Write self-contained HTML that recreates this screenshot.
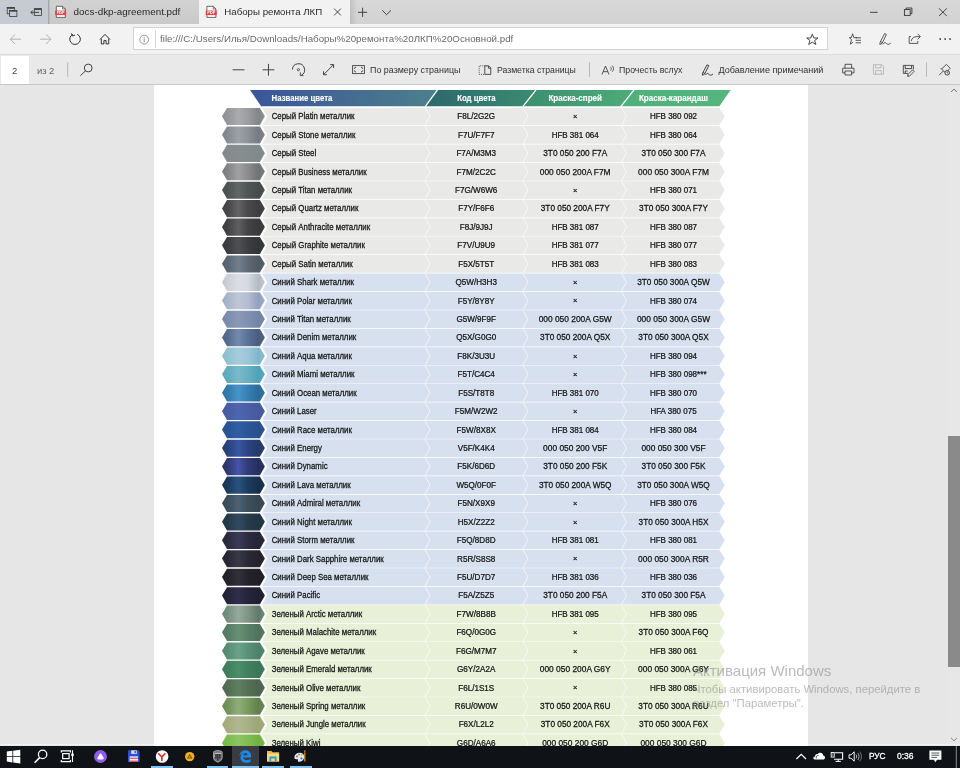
<!DOCTYPE html>
<html lang="ru">
<head>
<meta charset="utf-8">
<title>Наборы ремонта ЛКП</title>
<style>
html,body{margin:0;padding:0}
body{width:960px;height:768px;overflow:hidden;position:relative;background:#e6e6e6;font-family:"Liberation Sans",sans-serif;color:#222}
#root{position:absolute;left:0;top:0;width:960px;height:768px;overflow:hidden;filter:blur(.35px)}
.abs{position:absolute}
.t{position:absolute;white-space:nowrap;line-height:1;transform-origin:0 50%}
#tabbar{left:0;top:0;width:960px;height:24px;background:linear-gradient(#d8d8d8,#d2d2d2)}
#tabbar .left{left:0;top:0;width:48.5px;height:24px;background:#c6cbd3}
#tabbar .tab1{left:49px;top:0;width:150px;height:24px;background:linear-gradient(#d2d2d2,#c9c9c9);border-left:1px solid #b9bcc2;box-sizing:border-box}
#tabbar .tab2{left:199px;top:0;width:151px;height:24px;background:#f2f2f2}
#addr{left:0;top:24px;width:960px;height:30px;background:#f2f2f2;border-bottom:1px solid #dcdcdc}
#url{left:132.5px;top:3.2px;width:695px;height:23.3px;background:#fff;border:1px solid #d4d4d4;box-sizing:border-box}
#pdfbar{left:0;top:55px;width:960px;height:29px;background:#e9e9e9;border-bottom:1px solid #c6c6c6}
#pageno{left:1px;top:1px;width:28px;height:27.5px;background:#fff}
#viewer{left:0;top:85px;width:960px;height:660.5px;background:#e6e6e6;overflow:hidden}
#page{left:153.5px;top:0;width:654px;height:660.5px;background:#fff}
.tbl{position:absolute;left:0;top:85px}
.tbl text{font-family:"Liberation Sans",sans-serif;font-size:8.4px;fill:#151515;stroke:#151515;stroke-width:.25px}
.tbl .h text{font-weight:bold;fill:#fff;font-size:8.3px;stroke:#fff;stroke-width:.12px}
.tbl text.x{font-size:7.5px}
#sb{left:946px;top:85.5px;width:14px;height:660px;background:#e7e7e7}
.vline{top:744.4px;height:1.1px;background:#f2f2f2}
#thumb{left:948px;top:436px;width:12px;height:231px;background:#8a8a8a}
#wm{color:rgba(146,146,146,.62)}
#taskbar{left:0;top:745.5px;width:960px;height:22.5px;background:#0f1216}
#taskbar .act{left:231.5px;top:0;width:27.5px;height:22.5px;background:#393c41}
#taskbar .ul{position:absolute;top:20.5px;height:2px;background:#84c4f4}
#ico{position:absolute;left:0;top:0;pointer-events:none}
</style>
</head>
<body>
<div id="root">
<div id="tabbar" class="abs">
  <div class="left abs"></div>
  <div class="tab1 abs"></div>
  <div class="tab2 abs"></div>
  <div class="abs" style="left:350px;top:0;width:7px;height:24px;background:linear-gradient(90deg,rgba(0,0,0,.1),rgba(0,0,0,0))"></div>
  <span class="t" style="left:73.6px;top:7px;font-size:9.85px;color:#2a2a2a">docs-dkp-agreement.pdf</span>
  <span class="t" style="left:224.3px;top:7px;font-size:9.7px;color:#2a2a2a">Наборы ремонта ЛКП</span>
</div>
<div id="addr" class="abs">
  <div id="url" class="abs"></div>
  <span class="t" style="left:160px;top:10.3px;font-size:9.76px;color:#6b6b6b">file:///C:/Users/Илья/Downloads/Наборы%20ремонта%20ЛКП%20Основной.pdf</span>
</div>
<div id="pdfbar" class="abs">
  <div id="pageno" class="abs"></div>
  <span class="t" style="left:11.9px;top:11px;font-size:9.5px;color:#444">2</span>
  <span class="t" style="left:36.9px;top:11px;font-size:9.45px;color:#666">из 2</span>
  <span class="t" style="left:370px;top:11.4px;font-size:8.92px;color:#333">По размеру страницы</span>
  <span class="t" style="left:496.9px;top:11.4px;font-size:8.71px;color:#333">Разметка страницы</span>
  <span class="t" style="left:619px;top:11.4px;font-size:8.76px;color:#333">Прочесть вслух</span>
  <span class="t" style="left:718.5px;top:11.4px;font-size:9.08px;color:#333">Добавление примечаний</span>
</div>
<div id="viewer" class="abs">
  <div id="page" class="abs"></div>
</div>
<svg class="tbl" width="960" height="661" viewBox="0 85 960 661">
<defs><linearGradient id="h1" gradientUnits="userSpaceOnUse" x1="255" x2="432" y1="0" y2="0"><stop offset="0" stop-color="#3a569a"/><stop offset="0.5" stop-color="#446a92"/><stop offset="1" stop-color="#4a7f8c"/></linearGradient>
<linearGradient id="h2" gradientUnits="userSpaceOnUse" x1="430" x2="530" y1="0" y2="0"><stop offset="0" stop-color="#2c696c"/><stop offset="1" stop-color="#3a8a70"/></linearGradient>
<linearGradient id="h3" gradientUnits="userSpaceOnUse" x1="528" x2="628" y1="0" y2="0"><stop offset="0" stop-color="#3c9070"/><stop offset="1" stop-color="#4caa78"/></linearGradient>
<linearGradient id="h4" gradientUnits="userSpaceOnUse" x1="626" x2="726" y1="0" y2="0"><stop offset="0" stop-color="#50b07a"/><stop offset="1" stop-color="#55b57d"/></linearGradient><linearGradient id="g0" x1="0" x2="1" y1="0" y2="0"><stop offset="0" stop-color="#8d8e92"/><stop offset="0.12" stop-color="#949598"/><stop offset="0.38" stop-color="#aaabae"/><stop offset="0.6" stop-color="#9c9da0"/><stop offset="0.85" stop-color="#838588"/><stop offset="1" stop-color="#8e8f93"/></linearGradient><linearGradient id="g1" x1="0" x2="1" y1="0" y2="0"><stop offset="0" stop-color="#7f838b"/><stop offset="0.12" stop-color="#858991"/><stop offset="0.38" stop-color="#9da1a7"/><stop offset="0.6" stop-color="#8d9198"/><stop offset="0.85" stop-color="#767a82"/><stop offset="1" stop-color="#80848c"/></linearGradient><linearGradient id="g2" x1="0" x2="1" y1="0" y2="0"><stop offset="0" stop-color="#838a8c"/><stop offset="0.12" stop-color="#848b8d"/><stop offset="0.38" stop-color="#888e90"/><stop offset="0.6" stop-color="#858c8e"/><stop offset="0.85" stop-color="#82898b"/><stop offset="1" stop-color="#838a8c"/></linearGradient><linearGradient id="g3" x1="0" x2="1" y1="0" y2="0"><stop offset="0" stop-color="#7b7c7e"/><stop offset="0.12" stop-color="#828386"/><stop offset="0.38" stop-color="#9fa0a2"/><stop offset="0.6" stop-color="#8b8c8e"/><stop offset="0.85" stop-color="#717274"/><stop offset="1" stop-color="#7d7e80"/></linearGradient><linearGradient id="g4" x1="0" x2="1" y1="0" y2="0"><stop offset="0" stop-color="#4a4f4f"/><stop offset="0.12" stop-color="#4c5251"/><stop offset="0.38" stop-color="#606766"/><stop offset="0.6" stop-color="#4f5554"/><stop offset="0.85" stop-color="#474c4b"/><stop offset="1" stop-color="#4a504f"/></linearGradient><linearGradient id="g5" x1="0" x2="1" y1="0" y2="0"><stop offset="0" stop-color="#424244"/><stop offset="0.12" stop-color="#454547"/><stop offset="0.38" stop-color="#636366"/><stop offset="0.6" stop-color="#49494b"/><stop offset="0.85" stop-color="#3e3e40"/><stop offset="1" stop-color="#434345"/></linearGradient><linearGradient id="g6" x1="0" x2="1" y1="0" y2="0"><stop offset="0" stop-color="#3e3d3f"/><stop offset="0.12" stop-color="#414041"/><stop offset="0.38" stop-color="#5f5e60"/><stop offset="0.6" stop-color="#444345"/><stop offset="0.85" stop-color="#3a393a"/><stop offset="1" stop-color="#3e3d3f"/></linearGradient><linearGradient id="g7" x1="0" x2="1" y1="0" y2="0"><stop offset="0" stop-color="#37383b"/><stop offset="0.12" stop-color="#3a3b3e"/><stop offset="0.38" stop-color="#4f5054"/><stop offset="0.6" stop-color="#3d3e41"/><stop offset="0.85" stop-color="#343537"/><stop offset="1" stop-color="#38393b"/></linearGradient><linearGradient id="g8" x1="0" x2="1" y1="0" y2="0"><stop offset="0" stop-color="#55606a"/><stop offset="0.12" stop-color="#59656f"/><stop offset="0.38" stop-color="#71808d"/><stop offset="0.6" stop-color="#5e6a75"/><stop offset="0.85" stop-color="#505a63"/><stop offset="1" stop-color="#56616b"/></linearGradient><linearGradient id="g9" x1="0" x2="1" y1="0" y2="0"><stop offset="0" stop-color="#c1c6cf"/><stop offset="0.12" stop-color="#cbcfd6"/><stop offset="0.38" stop-color="#dbdee3"/><stop offset="0.6" stop-color="#d6d9df"/><stop offset="0.85" stop-color="#b4bac5"/><stop offset="1" stop-color="#c3c8d0"/></linearGradient><linearGradient id="g10" x1="0" x2="1" y1="0" y2="0"><stop offset="0" stop-color="#a0abc5"/><stop offset="0.12" stop-color="#a9b3ca"/><stop offset="0.38" stop-color="#bec6d7"/><stop offset="0.6" stop-color="#b4bdd1"/><stop offset="0.85" stop-color="#93a0bd"/><stop offset="1" stop-color="#a2adc6"/></linearGradient><linearGradient id="g11" x1="0" x2="1" y1="0" y2="0"><stop offset="0" stop-color="#7789ab"/><stop offset="0.12" stop-color="#7b8dad"/><stop offset="0.38" stop-color="#8999b6"/><stop offset="0.6" stop-color="#8091b0"/><stop offset="0.85" stop-color="#7285a7"/><stop offset="1" stop-color="#788aab"/></linearGradient><linearGradient id="g12" x1="0" x2="1" y1="0" y2="0"><stop offset="0" stop-color="#4f6586"/><stop offset="0.12" stop-color="#546b8e"/><stop offset="0.38" stop-color="#738aac"/><stop offset="0.6" stop-color="#597297"/><stop offset="0.85" stop-color="#495d7b"/><stop offset="1" stop-color="#506688"/></linearGradient><linearGradient id="g13" x1="0" x2="1" y1="0" y2="0"><stop offset="0" stop-color="#8bbcd1"/><stop offset="0.12" stop-color="#92c1d4"/><stop offset="0.38" stop-color="#a6ccdc"/><stop offset="0.6" stop-color="#9cc6d8"/><stop offset="0.85" stop-color="#7fb6cd"/><stop offset="1" stop-color="#8cbdd2"/></linearGradient><linearGradient id="g14" x1="0" x2="1" y1="0" y2="0"><stop offset="0" stop-color="#58a8bc"/><stop offset="0.12" stop-color="#5fabbf"/><stop offset="0.38" stop-color="#79b9c9"/><stop offset="0.6" stop-color="#68b0c2"/><stop offset="0.85" stop-color="#4ea2b8"/><stop offset="1" stop-color="#5aa8bc"/></linearGradient><linearGradient id="g15" x1="0" x2="1" y1="0" y2="0"><stop offset="0" stop-color="#3074a3"/><stop offset="0.12" stop-color="#3279ab"/><stop offset="0.38" stop-color="#4894c9"/><stop offset="0.6" stop-color="#3580b4"/><stop offset="0.85" stop-color="#2d6c98"/><stop offset="1" stop-color="#3075a5"/></linearGradient><linearGradient id="g16" x1="0" x2="1" y1="0" y2="0"><stop offset="0" stop-color="#475ba0"/><stop offset="0.12" stop-color="#485da3"/><stop offset="0.38" stop-color="#4f65b1"/><stop offset="0.6" stop-color="#4a5fa6"/><stop offset="0.85" stop-color="#45599c"/><stop offset="1" stop-color="#475ca0"/></linearGradient><linearGradient id="g17" x1="0" x2="1" y1="0" y2="0"><stop offset="0" stop-color="#2a5291"/><stop offset="0.12" stop-color="#2b5394"/><stop offset="0.38" stop-color="#305da5"/><stop offset="0.6" stop-color="#2c5597"/><stop offset="0.85" stop-color="#29508e"/><stop offset="1" stop-color="#2b5292"/></linearGradient><linearGradient id="g18" x1="0" x2="1" y1="0" y2="0"><stop offset="0" stop-color="#273e74"/><stop offset="0.12" stop-color="#294179"/><stop offset="0.38" stop-color="#3757a5"/><stop offset="0.6" stop-color="#2b4480"/><stop offset="0.85" stop-color="#243a6c"/><stop offset="1" stop-color="#273e75"/></linearGradient><linearGradient id="g19" x1="0" x2="1" y1="0" y2="0"><stop offset="0" stop-color="#2b3368"/><stop offset="0.12" stop-color="#2e376f"/><stop offset="0.38" stop-color="#4653a9"/><stop offset="0.6" stop-color="#323b78"/><stop offset="0.85" stop-color="#272e5e"/><stop offset="1" stop-color="#2c346a"/></linearGradient><linearGradient id="g20" x1="0" x2="1" y1="0" y2="0"><stop offset="0" stop-color="#193553"/><stop offset="0.12" stop-color="#1a3858"/><stop offset="0.38" stop-color="#275382"/><stop offset="0.6" stop-color="#1c3c5e"/><stop offset="0.85" stop-color="#16304b"/><stop offset="1" stop-color="#193554"/></linearGradient><linearGradient id="g21" x1="0" x2="1" y1="0" y2="0"><stop offset="0" stop-color="#394b56"/><stop offset="0.12" stop-color="#3b4d59"/><stop offset="0.38" stop-color="#4b6372"/><stop offset="0.6" stop-color="#3d505c"/><stop offset="0.85" stop-color="#364752"/><stop offset="1" stop-color="#394b57"/></linearGradient><linearGradient id="g22" x1="0" x2="1" y1="0" y2="0"><stop offset="0" stop-color="#233846"/><stop offset="0.12" stop-color="#243a49"/><stop offset="0.38" stop-color="#304b5f"/><stop offset="0.6" stop-color="#263c4c"/><stop offset="0.85" stop-color="#213543"/><stop offset="1" stop-color="#233847"/></linearGradient><linearGradient id="g23" x1="0" x2="1" y1="0" y2="0"><stop offset="0" stop-color="#28283c"/><stop offset="0.12" stop-color="#2a2a3f"/><stop offset="0.38" stop-color="#3b3b58"/><stop offset="0.6" stop-color="#2c2c42"/><stop offset="0.85" stop-color="#252538"/><stop offset="1" stop-color="#28283c"/></linearGradient><linearGradient id="g24" x1="0" x2="1" y1="0" y2="0"><stop offset="0" stop-color="#26252f"/><stop offset="0.12" stop-color="#282731"/><stop offset="0.38" stop-color="#3a3948"/><stop offset="0.6" stop-color="#2a2934"/><stop offset="0.85" stop-color="#24232c"/><stop offset="1" stop-color="#262630"/></linearGradient><linearGradient id="g25" x1="0" x2="1" y1="0" y2="0"><stop offset="0" stop-color="#212027"/><stop offset="0.12" stop-color="#232228"/><stop offset="0.38" stop-color="#32303a"/><stop offset="0.6" stop-color="#24232a"/><stop offset="0.85" stop-color="#201f25"/><stop offset="1" stop-color="#222127"/></linearGradient><linearGradient id="g26" x1="0" x2="1" y1="0" y2="0"><stop offset="0" stop-color="#222136"/><stop offset="0.12" stop-color="#232338"/><stop offset="0.38" stop-color="#302f4c"/><stop offset="0.6" stop-color="#25243a"/><stop offset="0.85" stop-color="#202033"/><stop offset="1" stop-color="#222236"/></linearGradient><linearGradient id="g27" x1="0" x2="1" y1="0" y2="0"><stop offset="0" stop-color="#6d8675"/><stop offset="0.12" stop-color="#748e7d"/><stop offset="0.38" stop-color="#96aa9d"/><stop offset="0.6" stop-color="#7e9686"/><stop offset="0.85" stop-color="#637a6b"/><stop offset="1" stop-color="#6e8777"/></linearGradient><linearGradient id="g28" x1="0" x2="1" y1="0" y2="0"><stop offset="0" stop-color="#547861"/><stop offset="0.12" stop-color="#577b64"/><stop offset="0.38" stop-color="#669176"/><stop offset="0.6" stop-color="#5a8068"/><stop offset="0.85" stop-color="#50725d"/><stop offset="1" stop-color="#557862"/></linearGradient><linearGradient id="g29" x1="0" x2="1" y1="0" y2="0"><stop offset="0" stop-color="#53876f"/><stop offset="0.12" stop-color="#568c73"/><stop offset="0.38" stop-color="#69a388"/><stop offset="0.6" stop-color="#5a9278"/><stop offset="0.85" stop-color="#4f8069"/><stop offset="1" stop-color="#548870"/></linearGradient><linearGradient id="g30" x1="0" x2="1" y1="0" y2="0"><stop offset="0" stop-color="#3f7a5b"/><stop offset="0.12" stop-color="#407d5d"/><stop offset="0.38" stop-color="#4a8f6a"/><stop offset="0.6" stop-color="#42805f"/><stop offset="0.85" stop-color="#3d7658"/><stop offset="1" stop-color="#3f7b5b"/></linearGradient><linearGradient id="g31" x1="0" x2="1" y1="0" y2="0"><stop offset="0" stop-color="#4f6950"/><stop offset="0.12" stop-color="#516c52"/><stop offset="0.38" stop-color="#607f61"/><stop offset="0.6" stop-color="#546f55"/><stop offset="0.85" stop-color="#4c654d"/><stop offset="1" stop-color="#506951"/></linearGradient><linearGradient id="g32" x1="0" x2="1" y1="0" y2="0"><stop offset="0" stop-color="#6b8953"/><stop offset="0.12" stop-color="#719158"/><stop offset="0.38" stop-color="#8fad79"/><stop offset="0.6" stop-color="#789a5e"/><stop offset="0.85" stop-color="#627e4d"/><stop offset="1" stop-color="#6c8a54"/></linearGradient><linearGradient id="g33" x1="0" x2="1" y1="0" y2="0"><stop offset="0" stop-color="#a0a97a"/><stop offset="0.12" stop-color="#a4ac7f"/><stop offset="0.38" stop-color="#b0b790"/><stop offset="0.6" stop-color="#a8b085"/><stop offset="0.85" stop-color="#9ca574"/><stop offset="1" stop-color="#a1aa7b"/></linearGradient><linearGradient id="g34" x1="0" x2="1" y1="0" y2="0"><stop offset="0" stop-color="#77b945"/><stop offset="0.12" stop-color="#7bbb4b"/><stop offset="0.38" stop-color="#8dc563"/><stop offset="0.6" stop-color="#80be52"/><stop offset="0.85" stop-color="#71b142"/><stop offset="1" stop-color="#77ba46"/></linearGradient></defs>
<polygon fill="url(#h1)" points="250,90 437.5,90 425.4,106.2 261.2,106.2"/>
<polygon fill="url(#h2)" points="437.5,90 536,90 523,106.2 425.4,106.2"/>
<polygon fill="url(#h3)" points="536,90 634,90 621,106.2 523,106.2"/>
<polygon fill="url(#h4)" points="634,90 730.6,90 719.4,106.2 621,106.2"/>
<g stroke="#fff" stroke-width="1.3"><line x1="437.5" y1="89.8" x2="425.4" y2="106.4"/><line x1="536" y1="89.8" x2="523" y2="106.4"/><line x1="634" y1="89.8" x2="621" y2="106.4"/></g>
<g class="h"><text transform="translate(271.6,100.9) scale(.94,1)">Название цвета</text>
<text text-anchor="middle" transform="translate(476.4,100.9) scale(.94,1)">Код цвета</text>
<text text-anchor="middle" transform="translate(575.2,100.9) scale(.97,1)">Краска-спрей</text>
<text text-anchor="middle" transform="translate(673.4,100.9) scale(.97,1)">Краска-карандаш</text></g>
<g>
<polygon fill="#e9e9e8" points="262.2,108.10 719.4,108.10 724.8,116.30 719.4,125.36 262.2,125.36 267.3,116.30"/>
<polyline fill="none" stroke="#fff" stroke-opacity=".75" stroke-width="0.9" points="425,108.10 430,116.30 425,125.36"/>
<polyline fill="none" stroke="#fff" stroke-opacity=".75" stroke-width="0.9" points="523,108.10 528,116.30 523,125.36"/>
<polyline fill="none" stroke="#fff" stroke-opacity=".75" stroke-width="0.9" points="621.5,108.10 626.5,116.30 621.5,125.36"/>
<polygon fill="url(#g0)" points="222,116.30 227,107.95 259.9,107.95 264.9,116.30 259.9,125.05 227,125.05"/>
<text transform="translate(271.7,119.30) scale(0.935,1)">Серый Platin металлик</text>
<text text-anchor="middle" transform="translate(476.2,119.30) scale(0.965,1)">F8L/2G2G</text>
<text class="x" text-anchor="middle" x="575.2" y="119.10">×</text>
<text text-anchor="middle" transform="translate(673.5,119.30) scale(0.953,1)">HFB 380 092</text>
</g>
<g>
<polygon fill="#e9e9e8" points="262.2,126.03 719.4,126.03 724.8,134.73 719.4,143.79 262.2,143.79 267.3,134.73"/>
<polyline fill="none" stroke="#fff" stroke-opacity=".75" stroke-width="0.9" points="425,126.03 430,134.73 425,143.79"/>
<polyline fill="none" stroke="#fff" stroke-opacity=".75" stroke-width="0.9" points="523,126.03 528,134.73 523,143.79"/>
<polyline fill="none" stroke="#fff" stroke-opacity=".75" stroke-width="0.9" points="621.5,126.03 626.5,134.73 621.5,143.79"/>
<polygon fill="url(#g1)" points="222,134.73 227,126.38 259.9,126.38 264.9,134.73 259.9,143.48 227,143.48"/>
<text transform="translate(271.7,137.73) scale(0.935,1)">Серый Stone металлик</text>
<text text-anchor="middle" transform="translate(476.2,137.73) scale(0.965,1)">F7U/F7F7</text>
<text text-anchor="middle" transform="translate(575.2,137.73) scale(0.953,1)">HFB 381 064</text>
<text text-anchor="middle" transform="translate(673.5,137.73) scale(0.953,1)">HFB 380 064</text>
</g>
<g>
<polygon fill="#e9e9e8" points="262.2,144.46 719.4,144.46 724.8,153.16 719.4,162.22 262.2,162.22 267.3,153.16"/>
<polyline fill="none" stroke="#fff" stroke-opacity=".75" stroke-width="0.9" points="425,144.46 430,153.16 425,162.22"/>
<polyline fill="none" stroke="#fff" stroke-opacity=".75" stroke-width="0.9" points="523,144.46 528,153.16 523,162.22"/>
<polyline fill="none" stroke="#fff" stroke-opacity=".75" stroke-width="0.9" points="621.5,144.46 626.5,153.16 621.5,162.22"/>
<polygon fill="url(#g2)" points="222,153.16 227,144.81 259.9,144.81 264.9,153.16 259.9,161.91 227,161.91"/>
<text transform="translate(271.7,156.16) scale(0.935,1)">Серый Steel</text>
<text text-anchor="middle" transform="translate(476.2,156.16) scale(0.965,1)">F7A/M3M3</text>
<text text-anchor="middle" transform="translate(575.2,156.16) scale(0.985,1)">3T0 050 200 F7A</text>
<text text-anchor="middle" transform="translate(673.5,156.16) scale(0.985,1)">3T0 050 300 F7A</text>
</g>
<g>
<polygon fill="#e9e9e8" points="262.2,162.89 719.4,162.89 724.8,171.59 719.4,180.65 262.2,180.65 267.3,171.59"/>
<polyline fill="none" stroke="#fff" stroke-opacity=".75" stroke-width="0.9" points="425,162.89 430,171.59 425,180.65"/>
<polyline fill="none" stroke="#fff" stroke-opacity=".75" stroke-width="0.9" points="523,162.89 528,171.59 523,180.65"/>
<polyline fill="none" stroke="#fff" stroke-opacity=".75" stroke-width="0.9" points="621.5,162.89 626.5,171.59 621.5,180.65"/>
<polygon fill="url(#g3)" points="222,171.59 227,163.24 259.9,163.24 264.9,171.59 259.9,180.34 227,180.34"/>
<text transform="translate(271.7,174.59) scale(0.935,1)">Серый Business металлик</text>
<text text-anchor="middle" transform="translate(476.2,174.59) scale(0.965,1)">F7M/2C2C</text>
<text text-anchor="middle" transform="translate(575.2,174.59) scale(1.0,1)">000 050 200A F7M</text>
<text text-anchor="middle" transform="translate(673.5,174.59) scale(1.0,1)">000 050 300A F7M</text>
</g>
<g>
<polygon fill="#e9e9e8" points="262.2,181.32 719.4,181.32 724.8,190.02 719.4,199.08 262.2,199.08 267.3,190.02"/>
<polyline fill="none" stroke="#fff" stroke-opacity=".75" stroke-width="0.9" points="425,181.32 430,190.02 425,199.08"/>
<polyline fill="none" stroke="#fff" stroke-opacity=".75" stroke-width="0.9" points="523,181.32 528,190.02 523,199.08"/>
<polyline fill="none" stroke="#fff" stroke-opacity=".75" stroke-width="0.9" points="621.5,181.32 626.5,190.02 621.5,199.08"/>
<polygon fill="url(#g4)" points="222,190.02 227,181.67 259.9,181.67 264.9,190.02 259.9,198.77 227,198.77"/>
<text transform="translate(271.7,193.02) scale(0.935,1)">Серый Titan металлик</text>
<text text-anchor="middle" transform="translate(476.2,193.02) scale(0.965,1)">F7G/W6W6</text>
<text class="x" text-anchor="middle" x="575.2" y="192.82">×</text>
<text text-anchor="middle" transform="translate(673.5,193.02) scale(0.953,1)">HFB 380 071</text>
</g>
<g>
<polygon fill="#e9e9e8" points="262.2,199.75 719.4,199.75 724.8,208.45 719.4,217.51 262.2,217.51 267.3,208.45"/>
<polyline fill="none" stroke="#fff" stroke-opacity=".75" stroke-width="0.9" points="425,199.75 430,208.45 425,217.51"/>
<polyline fill="none" stroke="#fff" stroke-opacity=".75" stroke-width="0.9" points="523,199.75 528,208.45 523,217.51"/>
<polyline fill="none" stroke="#fff" stroke-opacity=".75" stroke-width="0.9" points="621.5,199.75 626.5,208.45 621.5,217.51"/>
<polygon fill="url(#g5)" points="222,208.45 227,200.10 259.9,200.10 264.9,208.45 259.9,217.20 227,217.20"/>
<text transform="translate(271.7,211.45) scale(0.935,1)">Серый Quartz металлик</text>
<text text-anchor="middle" transform="translate(476.2,211.45) scale(0.965,1)">F7Y/F6F6</text>
<text text-anchor="middle" transform="translate(575.2,211.45) scale(0.985,1)">3T0 050 200A F7Y</text>
<text text-anchor="middle" transform="translate(673.5,211.45) scale(0.985,1)">3T0 050 300A F7Y</text>
</g>
<g>
<polygon fill="#e9e9e8" points="262.2,218.18 719.4,218.18 724.8,226.88 719.4,235.94 262.2,235.94 267.3,226.88"/>
<polyline fill="none" stroke="#fff" stroke-opacity=".75" stroke-width="0.9" points="425,218.18 430,226.88 425,235.94"/>
<polyline fill="none" stroke="#fff" stroke-opacity=".75" stroke-width="0.9" points="523,218.18 528,226.88 523,235.94"/>
<polyline fill="none" stroke="#fff" stroke-opacity=".75" stroke-width="0.9" points="621.5,218.18 626.5,226.88 621.5,235.94"/>
<polygon fill="url(#g6)" points="222,226.88 227,218.53 259.9,218.53 264.9,226.88 259.9,235.63 227,235.63"/>
<text transform="translate(271.7,229.88) scale(0.935,1)">Серый Anthracite металлик</text>
<text text-anchor="middle" transform="translate(476.2,229.88) scale(0.965,1)">F8J/9J9J</text>
<text text-anchor="middle" transform="translate(575.2,229.88) scale(0.953,1)">HFB 381 087</text>
<text text-anchor="middle" transform="translate(673.5,229.88) scale(0.953,1)">HFB 380 087</text>
</g>
<g>
<polygon fill="#e9e9e8" points="262.2,236.61 719.4,236.61 724.8,245.31 719.4,254.37 262.2,254.37 267.3,245.31"/>
<polyline fill="none" stroke="#fff" stroke-opacity=".75" stroke-width="0.9" points="425,236.61 430,245.31 425,254.37"/>
<polyline fill="none" stroke="#fff" stroke-opacity=".75" stroke-width="0.9" points="523,236.61 528,245.31 523,254.37"/>
<polyline fill="none" stroke="#fff" stroke-opacity=".75" stroke-width="0.9" points="621.5,236.61 626.5,245.31 621.5,254.37"/>
<polygon fill="url(#g7)" points="222,245.31 227,236.96 259.9,236.96 264.9,245.31 259.9,254.06 227,254.06"/>
<text transform="translate(271.7,248.31) scale(0.935,1)">Серый Graphite металлик</text>
<text text-anchor="middle" transform="translate(476.2,248.31) scale(0.965,1)">F7V/U9U9</text>
<text text-anchor="middle" transform="translate(575.2,248.31) scale(0.953,1)">HFB 381 077</text>
<text text-anchor="middle" transform="translate(673.5,248.31) scale(0.953,1)">HFB 380 077</text>
</g>
<g>
<polygon fill="#e9e9e8" points="262.2,255.04 719.4,255.04 724.8,263.74 719.4,272.80 262.2,272.80 267.3,263.74"/>
<polyline fill="none" stroke="#fff" stroke-opacity=".75" stroke-width="0.9" points="425,255.04 430,263.74 425,272.80"/>
<polyline fill="none" stroke="#fff" stroke-opacity=".75" stroke-width="0.9" points="523,255.04 528,263.74 523,272.80"/>
<polyline fill="none" stroke="#fff" stroke-opacity=".75" stroke-width="0.9" points="621.5,255.04 626.5,263.74 621.5,272.80"/>
<polygon fill="url(#g8)" points="222,263.74 227,255.39 259.9,255.39 264.9,263.74 259.9,272.49 227,272.49"/>
<text transform="translate(271.7,266.74) scale(0.935,1)">Серый Satin металлик</text>
<text text-anchor="middle" transform="translate(476.2,266.74) scale(0.965,1)">F5X/5T5T</text>
<text text-anchor="middle" transform="translate(575.2,266.74) scale(0.953,1)">HFB 381 083</text>
<text text-anchor="middle" transform="translate(673.5,266.74) scale(0.953,1)">HFB 380 083</text>
</g>
<g>
<polygon fill="#d6e0ee" points="262.2,273.47 719.4,273.47 724.8,282.17 719.4,291.23 262.2,291.23 267.3,282.17"/>
<polyline fill="none" stroke="#fff" stroke-opacity=".75" stroke-width="0.9" points="425,273.47 430,282.17 425,291.23"/>
<polyline fill="none" stroke="#fff" stroke-opacity=".75" stroke-width="0.9" points="523,273.47 528,282.17 523,291.23"/>
<polyline fill="none" stroke="#fff" stroke-opacity=".75" stroke-width="0.9" points="621.5,273.47 626.5,282.17 621.5,291.23"/>
<polygon fill="url(#g9)" points="222,282.17 227,273.82 259.9,273.82 264.9,282.17 259.9,290.92 227,290.92"/>
<text transform="translate(271.7,285.17) scale(0.935,1)">Синий Shark металлик</text>
<text text-anchor="middle" transform="translate(476.2,285.17) scale(0.965,1)">Q5W/H3H3</text>
<text class="x" text-anchor="middle" x="575.2" y="284.97">×</text>
<text text-anchor="middle" transform="translate(673.5,285.17) scale(0.985,1)">3T0 050 300A Q5W</text>
</g>
<g>
<polygon fill="#d6e0ee" points="262.2,291.90 719.4,291.90 724.8,300.60 719.4,309.66 262.2,309.66 267.3,300.60"/>
<polyline fill="none" stroke="#fff" stroke-opacity=".75" stroke-width="0.9" points="425,291.90 430,300.60 425,309.66"/>
<polyline fill="none" stroke="#fff" stroke-opacity=".75" stroke-width="0.9" points="523,291.90 528,300.60 523,309.66"/>
<polyline fill="none" stroke="#fff" stroke-opacity=".75" stroke-width="0.9" points="621.5,291.90 626.5,300.60 621.5,309.66"/>
<polygon fill="url(#g10)" points="222,300.60 227,292.25 259.9,292.25 264.9,300.60 259.9,309.35 227,309.35"/>
<text transform="translate(271.7,303.60) scale(0.935,1)">Синий Polar металлик</text>
<text text-anchor="middle" transform="translate(476.2,303.60) scale(0.965,1)">F5Y/8Y8Y</text>
<text class="x" text-anchor="middle" x="575.2" y="303.40">×</text>
<text text-anchor="middle" transform="translate(673.5,303.60) scale(0.953,1)">HFB 380 074</text>
</g>
<g>
<polygon fill="#d6e0ee" points="262.2,310.33 719.4,310.33 724.8,319.03 719.4,328.09 262.2,328.09 267.3,319.03"/>
<polyline fill="none" stroke="#fff" stroke-opacity=".75" stroke-width="0.9" points="425,310.33 430,319.03 425,328.09"/>
<polyline fill="none" stroke="#fff" stroke-opacity=".75" stroke-width="0.9" points="523,310.33 528,319.03 523,328.09"/>
<polyline fill="none" stroke="#fff" stroke-opacity=".75" stroke-width="0.9" points="621.5,310.33 626.5,319.03 621.5,328.09"/>
<polygon fill="url(#g11)" points="222,319.03 227,310.68 259.9,310.68 264.9,319.03 259.9,327.78 227,327.78"/>
<text transform="translate(271.7,322.03) scale(0.935,1)">Синий Titan металлик</text>
<text text-anchor="middle" transform="translate(476.2,322.03) scale(0.965,1)">G5W/9F9F</text>
<text text-anchor="middle" transform="translate(575.2,322.03) scale(1.0,1)">000 050 200A G5W</text>
<text text-anchor="middle" transform="translate(673.5,322.03) scale(1.0,1)">000 050 300A G5W</text>
</g>
<g>
<polygon fill="#d6e0ee" points="262.2,328.76 719.4,328.76 724.8,337.46 719.4,346.52 262.2,346.52 267.3,337.46"/>
<polyline fill="none" stroke="#fff" stroke-opacity=".75" stroke-width="0.9" points="425,328.76 430,337.46 425,346.52"/>
<polyline fill="none" stroke="#fff" stroke-opacity=".75" stroke-width="0.9" points="523,328.76 528,337.46 523,346.52"/>
<polyline fill="none" stroke="#fff" stroke-opacity=".75" stroke-width="0.9" points="621.5,328.76 626.5,337.46 621.5,346.52"/>
<polygon fill="url(#g12)" points="222,337.46 227,329.11 259.9,329.11 264.9,337.46 259.9,346.21 227,346.21"/>
<text transform="translate(271.7,340.46) scale(0.935,1)">Синий Denim металлик</text>
<text text-anchor="middle" transform="translate(476.2,340.46) scale(0.965,1)">Q5X/G0G0</text>
<text text-anchor="middle" transform="translate(575.2,340.46) scale(0.985,1)">3T0 050 200A Q5X</text>
<text text-anchor="middle" transform="translate(673.5,340.46) scale(0.985,1)">3T0 050 300A Q5X</text>
</g>
<g>
<polygon fill="#d6e0ee" points="262.2,347.19 719.4,347.19 724.8,355.89 719.4,364.95 262.2,364.95 267.3,355.89"/>
<polyline fill="none" stroke="#fff" stroke-opacity=".75" stroke-width="0.9" points="425,347.19 430,355.89 425,364.95"/>
<polyline fill="none" stroke="#fff" stroke-opacity=".75" stroke-width="0.9" points="523,347.19 528,355.89 523,364.95"/>
<polyline fill="none" stroke="#fff" stroke-opacity=".75" stroke-width="0.9" points="621.5,347.19 626.5,355.89 621.5,364.95"/>
<polygon fill="url(#g13)" points="222,355.89 227,347.54 259.9,347.54 264.9,355.89 259.9,364.64 227,364.64"/>
<text transform="translate(271.7,358.89) scale(0.935,1)">Синий Aqua металлик</text>
<text text-anchor="middle" transform="translate(476.2,358.89) scale(0.965,1)">F8K/3U3U</text>
<text class="x" text-anchor="middle" x="575.2" y="358.69">×</text>
<text text-anchor="middle" transform="translate(673.5,358.89) scale(0.953,1)">HFB 380 094</text>
</g>
<g>
<polygon fill="#d6e0ee" points="262.2,365.62 719.4,365.62 724.8,374.32 719.4,383.38 262.2,383.38 267.3,374.32"/>
<polyline fill="none" stroke="#fff" stroke-opacity=".75" stroke-width="0.9" points="425,365.62 430,374.32 425,383.38"/>
<polyline fill="none" stroke="#fff" stroke-opacity=".75" stroke-width="0.9" points="523,365.62 528,374.32 523,383.38"/>
<polyline fill="none" stroke="#fff" stroke-opacity=".75" stroke-width="0.9" points="621.5,365.62 626.5,374.32 621.5,383.38"/>
<polygon fill="url(#g14)" points="222,374.32 227,365.97 259.9,365.97 264.9,374.32 259.9,383.07 227,383.07"/>
<text transform="translate(271.7,377.32) scale(0.935,1)">Синий Miami металлик</text>
<text text-anchor="middle" transform="translate(476.2,377.32) scale(0.965,1)">F5T/C4C4</text>
<text class="x" text-anchor="middle" x="575.2" y="377.12">×</text>
<text text-anchor="middle" transform="translate(673.5,377.32) scale(0.953,1)">HFB 380 098</text>
<text transform="translate(697.1,377.32) scale(0.965,1)">***</text>
</g>
<g>
<polygon fill="#d6e0ee" points="262.2,384.05 719.4,384.05 724.8,392.75 719.4,401.81 262.2,401.81 267.3,392.75"/>
<polyline fill="none" stroke="#fff" stroke-opacity=".75" stroke-width="0.9" points="425,384.05 430,392.75 425,401.81"/>
<polyline fill="none" stroke="#fff" stroke-opacity=".75" stroke-width="0.9" points="523,384.05 528,392.75 523,401.81"/>
<polyline fill="none" stroke="#fff" stroke-opacity=".75" stroke-width="0.9" points="621.5,384.05 626.5,392.75 621.5,401.81"/>
<polygon fill="url(#g15)" points="222,392.75 227,384.40 259.9,384.40 264.9,392.75 259.9,401.50 227,401.50"/>
<text transform="translate(271.7,395.75) scale(0.935,1)">Синий Ocean металлик</text>
<text text-anchor="middle" transform="translate(476.2,395.75) scale(0.965,1)">F5S/T8T8</text>
<text text-anchor="middle" transform="translate(575.2,395.75) scale(0.953,1)">HFB 381 070</text>
<text text-anchor="middle" transform="translate(673.5,395.75) scale(0.953,1)">HFB 380 070</text>
</g>
<g>
<polygon fill="#d6e0ee" points="262.2,402.48 719.4,402.48 724.8,411.18 719.4,420.24 262.2,420.24 267.3,411.18"/>
<polyline fill="none" stroke="#fff" stroke-opacity=".75" stroke-width="0.9" points="425,402.48 430,411.18 425,420.24"/>
<polyline fill="none" stroke="#fff" stroke-opacity=".75" stroke-width="0.9" points="523,402.48 528,411.18 523,420.24"/>
<polyline fill="none" stroke="#fff" stroke-opacity=".75" stroke-width="0.9" points="621.5,402.48 626.5,411.18 621.5,420.24"/>
<polygon fill="url(#g16)" points="222,411.18 227,402.83 259.9,402.83 264.9,411.18 259.9,419.93 227,419.93"/>
<text transform="translate(271.7,414.18) scale(0.935,1)">Синий Laser</text>
<text text-anchor="middle" transform="translate(476.2,414.18) scale(0.965,1)">F5M/W2W2</text>
<text class="x" text-anchor="middle" x="575.2" y="413.98">×</text>
<text text-anchor="middle" transform="translate(673.5,414.18) scale(0.953,1)">HFA 380 075</text>
</g>
<g>
<polygon fill="#d6e0ee" points="262.2,420.91 719.4,420.91 724.8,429.61 719.4,438.67 262.2,438.67 267.3,429.61"/>
<polyline fill="none" stroke="#fff" stroke-opacity=".75" stroke-width="0.9" points="425,420.91 430,429.61 425,438.67"/>
<polyline fill="none" stroke="#fff" stroke-opacity=".75" stroke-width="0.9" points="523,420.91 528,429.61 523,438.67"/>
<polyline fill="none" stroke="#fff" stroke-opacity=".75" stroke-width="0.9" points="621.5,420.91 626.5,429.61 621.5,438.67"/>
<polygon fill="url(#g17)" points="222,429.61 227,421.26 259.9,421.26 264.9,429.61 259.9,438.36 227,438.36"/>
<text transform="translate(271.7,432.61) scale(0.935,1)">Синий Race металлик</text>
<text text-anchor="middle" transform="translate(476.2,432.61) scale(0.965,1)">F5W/8X8X</text>
<text text-anchor="middle" transform="translate(575.2,432.61) scale(0.953,1)">HFB 381 084</text>
<text text-anchor="middle" transform="translate(673.5,432.61) scale(0.953,1)">HFB 380 084</text>
</g>
<g>
<polygon fill="#d6e0ee" points="262.2,439.34 719.4,439.34 724.8,448.04 719.4,457.10 262.2,457.10 267.3,448.04"/>
<polyline fill="none" stroke="#fff" stroke-opacity=".75" stroke-width="0.9" points="425,439.34 430,448.04 425,457.10"/>
<polyline fill="none" stroke="#fff" stroke-opacity=".75" stroke-width="0.9" points="523,439.34 528,448.04 523,457.10"/>
<polyline fill="none" stroke="#fff" stroke-opacity=".75" stroke-width="0.9" points="621.5,439.34 626.5,448.04 621.5,457.10"/>
<polygon fill="url(#g18)" points="222,448.04 227,439.69 259.9,439.69 264.9,448.04 259.9,456.79 227,456.79"/>
<text transform="translate(271.7,451.04) scale(0.935,1)">Синий Energy</text>
<text text-anchor="middle" transform="translate(476.2,451.04) scale(0.965,1)">V5F/K4K4</text>
<text text-anchor="middle" transform="translate(575.2,451.04) scale(1.0,1)">000 050 200 V5F</text>
<text text-anchor="middle" transform="translate(673.5,451.04) scale(1.0,1)">000 050 300 V5F</text>
</g>
<g>
<polygon fill="#d6e0ee" points="262.2,457.77 719.4,457.77 724.8,466.47 719.4,475.53 262.2,475.53 267.3,466.47"/>
<polyline fill="none" stroke="#fff" stroke-opacity=".75" stroke-width="0.9" points="425,457.77 430,466.47 425,475.53"/>
<polyline fill="none" stroke="#fff" stroke-opacity=".75" stroke-width="0.9" points="523,457.77 528,466.47 523,475.53"/>
<polyline fill="none" stroke="#fff" stroke-opacity=".75" stroke-width="0.9" points="621.5,457.77 626.5,466.47 621.5,475.53"/>
<polygon fill="url(#g19)" points="222,466.47 227,458.12 259.9,458.12 264.9,466.47 259.9,475.22 227,475.22"/>
<text transform="translate(271.7,469.47) scale(0.935,1)">Синий Dynamic</text>
<text text-anchor="middle" transform="translate(476.2,469.47) scale(0.965,1)">F5K/6D6D</text>
<text text-anchor="middle" transform="translate(575.2,469.47) scale(0.985,1)">3T0 050 200 F5K</text>
<text text-anchor="middle" transform="translate(673.5,469.47) scale(0.985,1)">3T0 050 300 F5K</text>
</g>
<g>
<polygon fill="#d6e0ee" points="262.2,476.20 719.4,476.20 724.8,484.90 719.4,493.96 262.2,493.96 267.3,484.90"/>
<polyline fill="none" stroke="#fff" stroke-opacity=".75" stroke-width="0.9" points="425,476.20 430,484.90 425,493.96"/>
<polyline fill="none" stroke="#fff" stroke-opacity=".75" stroke-width="0.9" points="523,476.20 528,484.90 523,493.96"/>
<polyline fill="none" stroke="#fff" stroke-opacity=".75" stroke-width="0.9" points="621.5,476.20 626.5,484.90 621.5,493.96"/>
<polygon fill="url(#g20)" points="222,484.90 227,476.55 259.9,476.55 264.9,484.90 259.9,493.65 227,493.65"/>
<text transform="translate(271.7,487.90) scale(0.935,1)">Синий Lava металлик</text>
<text text-anchor="middle" transform="translate(476.2,487.90) scale(0.965,1)">W5Q/0F0F</text>
<text text-anchor="middle" transform="translate(575.2,487.90) scale(0.985,1)">3T0 050 200A W5Q</text>
<text text-anchor="middle" transform="translate(673.5,487.90) scale(0.985,1)">3T0 050 300A W5Q</text>
</g>
<g>
<polygon fill="#d6e0ee" points="262.2,494.63 719.4,494.63 724.8,503.33 719.4,512.39 262.2,512.39 267.3,503.33"/>
<polyline fill="none" stroke="#fff" stroke-opacity=".75" stroke-width="0.9" points="425,494.63 430,503.33 425,512.39"/>
<polyline fill="none" stroke="#fff" stroke-opacity=".75" stroke-width="0.9" points="523,494.63 528,503.33 523,512.39"/>
<polyline fill="none" stroke="#fff" stroke-opacity=".75" stroke-width="0.9" points="621.5,494.63 626.5,503.33 621.5,512.39"/>
<polygon fill="url(#g21)" points="222,503.33 227,494.98 259.9,494.98 264.9,503.33 259.9,512.08 227,512.08"/>
<text transform="translate(271.7,506.33) scale(0.935,1)">Синий Admiral металлик</text>
<text text-anchor="middle" transform="translate(476.2,506.33) scale(0.965,1)">F5N/X9X9</text>
<text class="x" text-anchor="middle" x="575.2" y="506.13">×</text>
<text text-anchor="middle" transform="translate(673.5,506.33) scale(0.953,1)">HFB 380 076</text>
</g>
<g>
<polygon fill="#d6e0ee" points="262.2,513.06 719.4,513.06 724.8,521.76 719.4,530.82 262.2,530.82 267.3,521.76"/>
<polyline fill="none" stroke="#fff" stroke-opacity=".75" stroke-width="0.9" points="425,513.06 430,521.76 425,530.82"/>
<polyline fill="none" stroke="#fff" stroke-opacity=".75" stroke-width="0.9" points="523,513.06 528,521.76 523,530.82"/>
<polyline fill="none" stroke="#fff" stroke-opacity=".75" stroke-width="0.9" points="621.5,513.06 626.5,521.76 621.5,530.82"/>
<polygon fill="url(#g22)" points="222,521.76 227,513.41 259.9,513.41 264.9,521.76 259.9,530.51 227,530.51"/>
<text transform="translate(271.7,524.76) scale(0.935,1)">Синий Night металлик</text>
<text text-anchor="middle" transform="translate(476.2,524.76) scale(0.965,1)">H5X/Z2Z2</text>
<text class="x" text-anchor="middle" x="575.2" y="524.56">×</text>
<text text-anchor="middle" transform="translate(673.5,524.76) scale(0.985,1)">3T0 050 300A H5X</text>
</g>
<g>
<polygon fill="#d6e0ee" points="262.2,531.49 719.4,531.49 724.8,540.19 719.4,549.25 262.2,549.25 267.3,540.19"/>
<polyline fill="none" stroke="#fff" stroke-opacity=".75" stroke-width="0.9" points="425,531.49 430,540.19 425,549.25"/>
<polyline fill="none" stroke="#fff" stroke-opacity=".75" stroke-width="0.9" points="523,531.49 528,540.19 523,549.25"/>
<polyline fill="none" stroke="#fff" stroke-opacity=".75" stroke-width="0.9" points="621.5,531.49 626.5,540.19 621.5,549.25"/>
<polygon fill="url(#g23)" points="222,540.19 227,531.84 259.9,531.84 264.9,540.19 259.9,548.94 227,548.94"/>
<text transform="translate(271.7,543.19) scale(0.935,1)">Синий Storm металлик</text>
<text text-anchor="middle" transform="translate(476.2,543.19) scale(0.965,1)">F5Q/8D8D</text>
<text text-anchor="middle" transform="translate(575.2,543.19) scale(0.953,1)">HFB 381 081</text>
<text text-anchor="middle" transform="translate(673.5,543.19) scale(0.953,1)">HFB 380 081</text>
</g>
<g>
<polygon fill="#d6e0ee" points="262.2,549.92 719.4,549.92 724.8,558.62 719.4,567.68 262.2,567.68 267.3,558.62"/>
<polyline fill="none" stroke="#fff" stroke-opacity=".75" stroke-width="0.9" points="425,549.92 430,558.62 425,567.68"/>
<polyline fill="none" stroke="#fff" stroke-opacity=".75" stroke-width="0.9" points="523,549.92 528,558.62 523,567.68"/>
<polyline fill="none" stroke="#fff" stroke-opacity=".75" stroke-width="0.9" points="621.5,549.92 626.5,558.62 621.5,567.68"/>
<polygon fill="url(#g24)" points="222,558.62 227,550.27 259.9,550.27 264.9,558.62 259.9,567.37 227,567.37"/>
<text transform="translate(271.7,561.62) scale(0.935,1)">Синий Dark Sapphire металлик</text>
<text text-anchor="middle" transform="translate(476.2,561.62) scale(0.965,1)">R5R/S8S8</text>
<text class="x" text-anchor="middle" x="575.2" y="561.42">×</text>
<text text-anchor="middle" transform="translate(673.5,561.62) scale(1.0,1)">000 050 300A R5R</text>
</g>
<g>
<polygon fill="#d6e0ee" points="262.2,568.35 719.4,568.35 724.8,577.05 719.4,586.11 262.2,586.11 267.3,577.05"/>
<polyline fill="none" stroke="#fff" stroke-opacity=".75" stroke-width="0.9" points="425,568.35 430,577.05 425,586.11"/>
<polyline fill="none" stroke="#fff" stroke-opacity=".75" stroke-width="0.9" points="523,568.35 528,577.05 523,586.11"/>
<polyline fill="none" stroke="#fff" stroke-opacity=".75" stroke-width="0.9" points="621.5,568.35 626.5,577.05 621.5,586.11"/>
<polygon fill="url(#g25)" points="222,577.05 227,568.70 259.9,568.70 264.9,577.05 259.9,585.80 227,585.80"/>
<text transform="translate(271.7,580.05) scale(0.935,1)">Синий Deep Sea металлик</text>
<text text-anchor="middle" transform="translate(476.2,580.05) scale(0.965,1)">F5U/D7D7</text>
<text text-anchor="middle" transform="translate(575.2,580.05) scale(0.953,1)">HFB 381 036</text>
<text text-anchor="middle" transform="translate(673.5,580.05) scale(0.953,1)">HFB 380 036</text>
</g>
<g>
<polygon fill="#d6e0ee" points="262.2,586.78 719.4,586.78 724.8,595.48 719.4,604.54 262.2,604.54 267.3,595.48"/>
<polyline fill="none" stroke="#fff" stroke-opacity=".75" stroke-width="0.9" points="425,586.78 430,595.48 425,604.54"/>
<polyline fill="none" stroke="#fff" stroke-opacity=".75" stroke-width="0.9" points="523,586.78 528,595.48 523,604.54"/>
<polyline fill="none" stroke="#fff" stroke-opacity=".75" stroke-width="0.9" points="621.5,586.78 626.5,595.48 621.5,604.54"/>
<polygon fill="url(#g26)" points="222,595.48 227,587.13 259.9,587.13 264.9,595.48 259.9,604.23 227,604.23"/>
<text transform="translate(271.7,598.48) scale(0.935,1)">Синий Pacific</text>
<text text-anchor="middle" transform="translate(476.2,598.48) scale(0.965,1)">F5A/Z5Z5</text>
<text text-anchor="middle" transform="translate(575.2,598.48) scale(0.985,1)">3T0 050 200 F5A</text>
<text text-anchor="middle" transform="translate(673.5,598.48) scale(0.985,1)">3T0 050 300 F5A</text>
</g>
<g>
<polygon fill="#e8f0d7" points="262.2,605.21 719.4,605.21 724.8,613.91 719.4,622.97 262.2,622.97 267.3,613.91"/>
<polyline fill="none" stroke="#fff" stroke-opacity=".75" stroke-width="0.9" points="425,605.21 430,613.91 425,622.97"/>
<polyline fill="none" stroke="#fff" stroke-opacity=".75" stroke-width="0.9" points="523,605.21 528,613.91 523,622.97"/>
<polyline fill="none" stroke="#fff" stroke-opacity=".75" stroke-width="0.9" points="621.5,605.21 626.5,613.91 621.5,622.97"/>
<polygon fill="url(#g27)" points="222,613.91 227,605.56 259.9,605.56 264.9,613.91 259.9,622.66 227,622.66"/>
<text transform="translate(271.7,616.91) scale(0.935,1)">Зеленый Arctic металлик</text>
<text text-anchor="middle" transform="translate(476.2,616.91) scale(0.965,1)">F7W/8B8B</text>
<text text-anchor="middle" transform="translate(575.2,616.91) scale(0.953,1)">HFB 381 095</text>
<text text-anchor="middle" transform="translate(673.5,616.91) scale(0.953,1)">HFB 380 095</text>
</g>
<g>
<polygon fill="#e8f0d7" points="262.2,623.64 719.4,623.64 724.8,632.34 719.4,641.40 262.2,641.40 267.3,632.34"/>
<polyline fill="none" stroke="#fff" stroke-opacity=".75" stroke-width="0.9" points="425,623.64 430,632.34 425,641.40"/>
<polyline fill="none" stroke="#fff" stroke-opacity=".75" stroke-width="0.9" points="523,623.64 528,632.34 523,641.40"/>
<polyline fill="none" stroke="#fff" stroke-opacity=".75" stroke-width="0.9" points="621.5,623.64 626.5,632.34 621.5,641.40"/>
<polygon fill="url(#g28)" points="222,632.34 227,623.99 259.9,623.99 264.9,632.34 259.9,641.09 227,641.09"/>
<text transform="translate(271.7,635.34) scale(0.935,1)">Зеленый Malachite металлик</text>
<text text-anchor="middle" transform="translate(476.2,635.34) scale(0.965,1)">F6Q/0G0G</text>
<text class="x" text-anchor="middle" x="575.2" y="635.14">×</text>
<text text-anchor="middle" transform="translate(673.5,635.34) scale(0.985,1)">3T0 050 300A F6Q</text>
</g>
<g>
<polygon fill="#e8f0d7" points="262.2,642.07 719.4,642.07 724.8,650.77 719.4,659.83 262.2,659.83 267.3,650.77"/>
<polyline fill="none" stroke="#fff" stroke-opacity=".75" stroke-width="0.9" points="425,642.07 430,650.77 425,659.83"/>
<polyline fill="none" stroke="#fff" stroke-opacity=".75" stroke-width="0.9" points="523,642.07 528,650.77 523,659.83"/>
<polyline fill="none" stroke="#fff" stroke-opacity=".75" stroke-width="0.9" points="621.5,642.07 626.5,650.77 621.5,659.83"/>
<polygon fill="url(#g29)" points="222,650.77 227,642.42 259.9,642.42 264.9,650.77 259.9,659.52 227,659.52"/>
<text transform="translate(271.7,653.77) scale(0.935,1)">Зеленый Agave металлик</text>
<text text-anchor="middle" transform="translate(476.2,653.77) scale(0.965,1)">F6G/M7M7</text>
<text class="x" text-anchor="middle" x="575.2" y="653.57">×</text>
<text text-anchor="middle" transform="translate(673.5,653.77) scale(0.953,1)">HFB 380 061</text>
</g>
<g>
<polygon fill="#e8f0d7" points="262.2,660.50 719.4,660.50 724.8,669.20 719.4,678.26 262.2,678.26 267.3,669.20"/>
<polyline fill="none" stroke="#fff" stroke-opacity=".75" stroke-width="0.9" points="425,660.50 430,669.20 425,678.26"/>
<polyline fill="none" stroke="#fff" stroke-opacity=".75" stroke-width="0.9" points="523,660.50 528,669.20 523,678.26"/>
<polyline fill="none" stroke="#fff" stroke-opacity=".75" stroke-width="0.9" points="621.5,660.50 626.5,669.20 621.5,678.26"/>
<polygon fill="url(#g30)" points="222,669.20 227,660.85 259.9,660.85 264.9,669.20 259.9,677.95 227,677.95"/>
<text transform="translate(271.7,672.20) scale(0.935,1)">Зеленый Emerald металлик</text>
<text text-anchor="middle" transform="translate(476.2,672.20) scale(0.965,1)">G6Y/2A2A</text>
<text text-anchor="middle" transform="translate(575.2,672.20) scale(1.0,1)">000 050 200A G6Y</text>
<text text-anchor="middle" transform="translate(673.5,672.20) scale(1.0,1)">000 050 300A G6Y</text>
</g>
<g>
<polygon fill="#e8f0d7" points="262.2,678.93 719.4,678.93 724.8,687.63 719.4,696.69 262.2,696.69 267.3,687.63"/>
<polyline fill="none" stroke="#fff" stroke-opacity=".75" stroke-width="0.9" points="425,678.93 430,687.63 425,696.69"/>
<polyline fill="none" stroke="#fff" stroke-opacity=".75" stroke-width="0.9" points="523,678.93 528,687.63 523,696.69"/>
<polyline fill="none" stroke="#fff" stroke-opacity=".75" stroke-width="0.9" points="621.5,678.93 626.5,687.63 621.5,696.69"/>
<polygon fill="url(#g31)" points="222,687.63 227,679.28 259.9,679.28 264.9,687.63 259.9,696.38 227,696.38"/>
<text transform="translate(271.7,690.63) scale(0.935,1)">Зеленый Olive металлик</text>
<text text-anchor="middle" transform="translate(476.2,690.63) scale(0.965,1)">F6L/1S1S</text>
<text class="x" text-anchor="middle" x="575.2" y="690.43">×</text>
<text text-anchor="middle" transform="translate(673.5,690.63) scale(0.953,1)">HFB 380 085</text>
</g>
<g>
<polygon fill="#e8f0d7" points="262.2,697.36 719.4,697.36 724.8,706.06 719.4,715.12 262.2,715.12 267.3,706.06"/>
<polyline fill="none" stroke="#fff" stroke-opacity=".75" stroke-width="0.9" points="425,697.36 430,706.06 425,715.12"/>
<polyline fill="none" stroke="#fff" stroke-opacity=".75" stroke-width="0.9" points="523,697.36 528,706.06 523,715.12"/>
<polyline fill="none" stroke="#fff" stroke-opacity=".75" stroke-width="0.9" points="621.5,697.36 626.5,706.06 621.5,715.12"/>
<polygon fill="url(#g32)" points="222,706.06 227,697.71 259.9,697.71 264.9,706.06 259.9,714.81 227,714.81"/>
<text transform="translate(271.7,709.06) scale(0.935,1)">Зеленый Spring металлик</text>
<text text-anchor="middle" transform="translate(476.2,709.06) scale(0.965,1)">R6U/0W0W</text>
<text text-anchor="middle" transform="translate(575.2,709.06) scale(0.985,1)">3T0 050 200A R6U</text>
<text text-anchor="middle" transform="translate(673.5,709.06) scale(0.985,1)">3T0 050 300A R6U</text>
</g>
<g>
<polygon fill="#e8f0d7" points="262.2,715.79 719.4,715.79 724.8,724.49 719.4,733.55 262.2,733.55 267.3,724.49"/>
<polyline fill="none" stroke="#fff" stroke-opacity=".75" stroke-width="0.9" points="425,715.79 430,724.49 425,733.55"/>
<polyline fill="none" stroke="#fff" stroke-opacity=".75" stroke-width="0.9" points="523,715.79 528,724.49 523,733.55"/>
<polyline fill="none" stroke="#fff" stroke-opacity=".75" stroke-width="0.9" points="621.5,715.79 626.5,724.49 621.5,733.55"/>
<polygon fill="url(#g33)" points="222,724.49 227,716.14 259.9,716.14 264.9,724.49 259.9,733.24 227,733.24"/>
<text transform="translate(271.7,727.49) scale(0.935,1)">Зеленый Jungle металлик</text>
<text text-anchor="middle" transform="translate(476.2,727.49) scale(0.965,1)">F6X/L2L2</text>
<text text-anchor="middle" transform="translate(575.2,727.49) scale(0.985,1)">3T0 050 200A F6X</text>
<text text-anchor="middle" transform="translate(673.5,727.49) scale(0.985,1)">3T0 050 300A F6X</text>
</g>
<g>
<polygon fill="#e8f0d7" points="262.2,734.22 719.4,734.22 724.8,742.92 719.4,751.98 262.2,751.98 267.3,742.92"/>
<polyline fill="none" stroke="#fff" stroke-opacity=".75" stroke-width="0.9" points="425,734.22 430,742.92 425,751.98"/>
<polyline fill="none" stroke="#fff" stroke-opacity=".75" stroke-width="0.9" points="523,734.22 528,742.92 523,751.98"/>
<polyline fill="none" stroke="#fff" stroke-opacity=".75" stroke-width="0.9" points="621.5,734.22 626.5,742.92 621.5,751.98"/>
<polygon fill="url(#g34)" points="222,742.92 227,734.57 259.9,734.57 264.9,742.92 259.9,751.67 227,751.67"/>
<text transform="translate(271.7,745.92) scale(0.935,1)">Зеленый Kiwi</text>
<text text-anchor="middle" transform="translate(476.2,745.92) scale(0.965,1)">G6D/A6A6</text>
<text text-anchor="middle" transform="translate(575.2,745.92) scale(1.0,1)">000 050 200 G6D</text>
<text text-anchor="middle" transform="translate(673.5,745.92) scale(1.0,1)">000 050 300 G6D</text>
</g>
</svg>
<div id="sb" class="abs"></div>
<div class="vline abs" style="left:0;width:153.5px"></div>
<div class="vline abs" style="left:807.5px;width:152.5px"></div>
<div id="thumb" class="abs"></div>
<div id="wm">
  <span class="t" style="left:693px;top:663px;font-size:15px">Активация Windows</span>
  <span class="t" style="left:693px;top:684.2px;font-size:11.3px">Чтобы активировать Windows, перейдите в</span>
  <span class="t" style="left:693px;top:698.3px;font-size:11.3px">раздел "Параметры".</span>
</div>
<div id="taskbar" class="abs">
  <div class="act abs"></div>
  <div class="ul" style="left:151.3px;width:21.5px"></div>
  <div class="ul" style="left:207px;width:21px"></div>
  <div class="ul" style="left:232px;width:27px"></div>
  <div class="ul" style="left:262px;width:21.8px"></div>
  <div class="ul" style="left:289.8px;width:21.8px"></div>
  <span class="t" style="left:869px;top:6.5px;font-size:9px;color:#fff;-webkit-text-stroke:.3px #fff;transform:scaleX(.92)">РУС</span>
  <span class="t" style="left:897.2px;top:6.5px;font-size:9px;color:#fff;-webkit-text-stroke:.3px #fff;transform:scaleX(.94)">0:36</span>
</div>
<svg id="ico" width="960" height="768" viewBox="0 0 960 768">
<!-- tab bar left icons -->
<g fill="none" stroke="#3a3a3a" stroke-width="0.8">
  <rect x="7.2" y="7.5" width="7.3" height="6.3"/><path d="M7.2 8.1H14.5" stroke-width="1.3"/>
  <rect x="9.6" y="10.4" width="7.3" height="6.2" fill="#c6cbd3"/><path d="M9.6 11H16.9" stroke-width="1.3"/>
  <rect x="34.3" y="8.6" width="7.2" height="6.9"/><path d="M34.3 9.3H41.5" stroke-width="1.2"/>
  <path d="M39 12.4H30.8M32.8 10.5L30.8 12.4L32.8 14.3" stroke-width="0.9"/>
</g>
<path d="M48.5 0V24" stroke="#a3a7ad" stroke-width="1"/>
<!-- pdf icons -->
<g id="pdfi">
  <path d="M56.3 6.3H62.6L65.3 9V17.4H56.3Z" fill="#fff" stroke="#444" stroke-width="0.8"/>
  <path d="M62.6 6.3V9H65.3" fill="none" stroke="#444" stroke-width="0.7"/>
  <rect x="55.1" y="10.6" width="11" height="4.5" fill="#e8404a"/>
  <text x="60.6" y="14.2" text-anchor="middle" font-family="Liberation Sans, sans-serif" font-weight="bold" font-size="3.9" fill="#fff">PDF</text>
</g>
<use href="#pdfi" x="150.6" y="0"/>
<!-- tab close / new tab / chevron -->
<g fill="none" stroke="#333" stroke-width="0.9">
  <path d="M334.1 8.6L340.9 15.4M340.9 8.6L334.1 15.4"/>
  <path d="M358 12.3H367.2M362.6 7.7V16.9"/>
  <path d="M382.2 10.3L386.6 14.7L391 10.3"/>
</g>
<!-- window controls -->
<g fill="none" stroke="#333" stroke-width="0.9">
  <path d="M870 12.3H877.6"/>
  <rect x="904.4" y="9.6" width="5.8" height="5.8"/><path d="M906.2 9.6V8H911.9V13.7H910.2"/>
  <path d="M939 8.3L946.8 16.1M946.8 8.3L939 16.1"/>
</g>
<!-- nav -->
<g fill="none" stroke="#b3b3b3" stroke-width="1">
  <path d="M21 39.2H10.3M15.2 34.4L10.3 39.2L15.2 44.1"/>
  <path d="M40.1 39.2H50.9M46 34.4L50.9 39.2L46 44.1"/>
</g>
<g fill="none" stroke="#333" stroke-width="1">
  <path d="M72.9 34.3A5.3 5.3 0 1 0 77.2 34.3"/><path d="M72.4 33.2V36H75.2" stroke-width="0.9" transform="rotate(-20 72.4 36)"/>
  <path d="M99.9 39.6L105 34.4L110.1 39.6"/><path d="M101.3 38.6V43.9H103.9V40.6H106.1V43.9H108.7V38.6"/>
</g>
<!-- url box bits -->
<circle cx="144.2" cy="39.6" r="4.4" fill="none" stroke="#7d7d7d" stroke-width="0.8"/>
<path d="M144.2 38.6V42.2M144.2 36.7V37.6" stroke="#7d7d7d" stroke-width="0.9"/>
<path d="M155.5 30.2V47.5" stroke="#d6d6d6" stroke-width="1"/>
<path d="M812.3 34.2L813.9 38H817.9L814.7 40.5L815.9 44.5L812.3 42.1L808.7 44.5L809.9 40.5L806.7 38H810.7Z" fill="none" stroke="#333" stroke-width="0.9" stroke-linejoin="miter"/>
<!-- right addr icons -->
<g fill="none" stroke="#333" stroke-width="0.8">
  <path d="M857.2 37.7H853.9L852.6 33.8L851.3 37.7H849.3L851.5 39.6L850.3 44.2L853 42.2"/>
  <path d="M855.6 37.8H861M855.6 40.3H861M855.6 42.8H861"/>
  <path d="M884.6 33.6L886.4 34.4L882 43.6L879.8 44.4L880.2 42.2Z M880.6 41.6L882.4 42.6"/><path d="M883 44.2C884.4 42.2 885.4 42.2 886.4 43.4S888.6 44.8 890.8 43.2"/>
  <path d="M911 36.6H909.2V43.4H917.8V41"/><path d="M911.2 41.2C911.6 38.2 914 36.6 917 36.6H920M917.6 33.8L920.4 36.6L917.6 39.4"/>
</g>
<g fill="#222"><rect x="939.5" y="38.3" width="1.5" height="1.5"/><rect x="944.4" y="38.3" width="1.5" height="1.5"/><rect x="949.3" y="38.3" width="1.5" height="1.5"/></g>
<!-- pdf toolbar -->
<path d="M67.7 62.4V76.9M589.5 62.4V76.9M926.5 62.6V76.8" stroke="#b9b9b9" stroke-width="1"/>
<g fill="none" stroke="#333" stroke-width="0.9">
  <circle cx="88.2" cy="68" r="3.9"/><path d="M85.5 70.9L80.4 75.7"/>
  <path d="M232.6 69.8H244.5"/>
  <path d="M262.6 69.8H274.4M268.5 63.9V75.7"/>
  <path d="M292.4 69.6A6.1 6.1 0 1 1 301.2 75.3"/><path d="M300.3 72.4V75.6H303.4" stroke-width="0.82"/>
  <circle cx="298.4" cy="69.7" r="1.1" stroke-width="0.8"/>
  <path d="M323.7 74.5L333.4 64.8M330.2 64.6H333.6V68M323.5 71.3V74.7H326.9"/>
  <rect x="352.6" y="65.6" width="11.8" height="8" stroke-width="0.9" stroke="#444"/>
  <path d="M354.3 68.8Q354.4 67.3 356 67.1M361 67.1Q362.6 67.3 362.7 68.8M362.7 70.4Q362.6 71.9 361 72.1M356 72.1Q354.4 71.9 354.3 70.4" stroke-width="0.9"/>
  <path d="M484.8 65.8H488.6L490.8 68V74.4H484.8Z M488.4 65.8V68.2H490.8" stroke-width="0.85"/>
  <path d="M484.8 65.8H479.2V74.4H484.8" stroke-width="0.8" stroke-dasharray="1 1"/>
  <path d="M602 74.5L605.5 66L609 74.5M603.2 71.7H607.8" stroke-width="0.82"/>
  <path d="M610.5 66.8C611.5 67.8 611.5 69.6 610.5 70.6M612.2 65.6C614 67.4 614 70 612.2 71.8" stroke-width="0.75"/>
  <path d="M707 64.8L708.8 65.6L704.4 74.4L702.3 75.2L702.7 73Z M703.1 72.4L704.8 73.4" stroke-width="0.9"/><path d="M705.4 75C706.8 73 707.8 73 708.8 74.2S711 75.6 713 74.1" stroke-width="0.9"/>
  <path d="M845 68.2V64.3H851.6V68.2M845 72.9H842.7V68.2H854V72.9H851.6M845 71H851.6V75H845Z" stroke-width="0.82"/>
  <path d="M903.3 65.4H913.4V69.5M903.3 65.4V73.4H908" stroke-width="0.82"/><path d="M905.2 65.6V68.6H911.6V65.6" stroke-width="0.9"/><path d="M905.2 73.2V71H907.6" stroke-width="0.9"/>
  <path d="M912.6 69.8L914.2 71.4L909.4 76.2L907.6 76.4L907.8 74.6Z" stroke-width="0.8" fill="none"/><path d="M907.7 76.3L909 75L908.4 74.4Z" fill="#333" stroke="none"/>
  <path d="M939 75.3L943.4 70.9M940.6 68L946.4 73.8M941.6 69L946.4 64.4L950.2 68.2L946 72.4" stroke-width="0.82"/>
  <circle cx="947.2" cy="72.8" r="2.3" fill="#e9e9e9" stroke-width="0.9"/><path d="M947.2 71.4V73H948.4" stroke-width="0.7"/>
</g>
<g fill="none" stroke="#b2b2b2" stroke-width="0.82">
  <path d="M873.4 64.7H881.8L883.5 66.4V74.3H873.4Z"/><path d="M875.4 64.9V67.9H881V64.9M875.6 74.1V70.6H881.2V74.1"/>
</g>
<!-- scrollbar arrows -->
<g fill="none" stroke="#666" stroke-width="0.9"><path d="M951 92.1L954 89.1L957 92.1"/><path d="M951 737.9L954 740.8L957 737.9" stroke="#777"/></g>
<!-- taskbar icons -->
<g fill="#fff">
  <path d="M6.8 751.6L12.4 750.8V756.2H6.8ZM13.2 750.7L20.3 749.7V756.2H13.2ZM6.8 757H12.4V762.4L6.8 761.6ZM13.2 757H20.3V763.5L13.2 762.5Z"/>
</g>
<g fill="none" stroke="#fff" stroke-width="1.3">
  <circle cx="42.6" cy="754.4" r="4.2"/><path d="M39.7 757.6L34.6 762.8" stroke-width="1.5"/>
  <rect x="62.7" y="753.6" width="6.4" height="5" stroke-width="1.2"/>
  <path d="M61.3 752.6V750.9H70.4V752.6M61.3 760V761.7H70.4V760" stroke-width="1.2"/>
  <path d="M72.5 750.2V762" stroke-width="1.1"/><rect x="71.3" y="753.6" width="2.4" height="2.4" fill="#fff" stroke="none"/>
</g>
<circle cx="100.5" cy="756.5" r="6.4" fill="#9a5cf2"/><circle cx="100.5" cy="756.5" r="5.2" fill="#8b5cf8"/>
<path d="M100.5 753.6C101 753.6 101.4 754 101.9 754.9L103.5 757.6C104.1 758.7 103.5 759.4 102.4 759.4H98.6C97.5 759.4 96.9 758.7 97.5 757.6L99.1 754.9C99.6 754 100 753.6 100.5 753.6Z" fill="#fff"/>
<g>
  <path d="M128 750.3H138.2L139.6 751.7V761.9H128Z" fill="#2b4fd0"/>
  <rect x="131.2" y="750.3" width="5.6" height="3.6" fill="#d5dcf0"/><rect x="134.6" y="750.9" width="1.3" height="2.3" fill="#2b4fd0"/>
  <rect x="129.6" y="756.4" width="8.4" height="5.5" fill="#f2f2f2"/><rect x="129.6" y="757.7" width="8.4" height="1.1" fill="#d8454f"/><rect x="129.6" y="760.6" width="8.4" height="1.3" fill="#d8454f"/>
</g>
<circle cx="162.1" cy="756.5" r="6.3" fill="#fff"/>
<path d="M161.8 761V757L158.2 753.2M161.8 757L165.4 753.2" fill="none" stroke="#e3262e" stroke-width="1.6"/>
<circle cx="189.7" cy="756.6" r="4.7" fill="#f0b020"/>
<path d="M189.7 753.8L192.4 758.6H187Z" fill="#5a3e10" opacity=".85"/><path d="M189.7 755.6L190.8 757.6H188.6Z" fill="#f0b020"/>
<g>
  <path d="M213 752.4C213 750.9 215.2 750 217.8 750C220.4 750 222.7 750.9 222.7 752.4V757.6C222.7 760 220.1 761.8 217.8 762.8C215.5 761.8 213 760 213 757.6Z" fill="#9c9c9c"/>
  <path d="M214 752.8C214 751.7 215.8 751 217.8 751C219.8 751 221.7 751.7 221.7 752.8V757.4C221.7 759.3 219.6 760.8 217.8 761.6C216 760.8 214 759.3 214 757.4Z" fill="#6e6e6e"/>
  <path d="M214.6 753.3H221.1" stroke="#d8d8d8" stroke-width="0.9" fill="none"/>
  <path d="M216 754V758.6M217.9 754V760.4M219.8 754V758.6" stroke="#232323" stroke-width="1.1" fill="none"/>
  <path d="M214.4 754.4V757.2" stroke="#cfcfcf" stroke-width="0.7" fill="none"/>
</g>
<path transform="translate(237.7,748.95) scale(.635)" d="M2.74 10.81C3.83-1.36 22.5-1.36 21.2 13.56H8.61c0 3.59 4.47 4.17 6.5 3.94 1.97-.22 3.72-.9 5.31-1.87v4.38c-7.79 4.62-17.76.08-15.81-8.27.5-2.1 1.9-4.45 4.54-5.96-2.58.79-4.56 3.13-6.41 5.03zM8.73 9.92h6.83c.08-5.1-6.59-4.81-6.83 0z" fill="#1a8ae6"/>
<g>
  <path d="M267 751H271.4L272.6 752.3H279.1V761.5H267Z" fill="#e9b949"/>
  <path d="M267 753.6H279.1V761.5H267Z" fill="#f8d978"/>
  <path d="M269.4 756.6H276.6V761.5H274.8V758.6H271.2V761.5H269.4Z" fill="#2a9be0"/>
</g>
<g>
  <path d="M299.6 752.8C302.8 752.8 304.4 754.8 304.2 757.2C304 759.8 301.8 761.8 299 761.8C298 761.8 297.6 761.2 298 760.4C298.4 759.6 297.8 759 296.8 759.2C295.2 759.5 294.2 758.6 294.4 757C294.8 754.6 296.8 752.8 299.6 752.8Z" fill="#e6ebf3"/>
  <circle cx="297" cy="756.4" r="1" fill="#e5484d"/><circle cx="299" cy="754.6" r="1" fill="#3bb273"/><circle cx="301.6" cy="754.8" r="1" fill="#f0a23a"/><circle cx="301.4" cy="758.4" r="1.1" fill="#2f7fd6"/>
  <path d="M304.2 752.4H305.4V761.4H304.2Z" fill="#e8962e"/><path d="M304 750.2H305.6V752.6H304Z" fill="#9a6a3a"/>
</g>
<!-- tray -->
<g fill="none" stroke="#fff" stroke-width="1.2">
  <path d="M796.4 759L801.2 754.3L806 759"/>
  <path d="M834.8 752.7H842.6V759.3H834" stroke-width="1.1"/><path d="M838.2 759.3V761.2M835.6 761.4H840.8" stroke-width="1"/>
  <rect x="831.2" y="752.5" width="3" height="4.6" fill="#0f1216" stroke-width="0.9"/><path d="M832 753.9H833.4M832 755.3H833.4" stroke-width="0.5"/>
  <path d="M849 754.8H851L854.2 751.8V761.2L851 758.2H849Z" stroke-width="0.95"/>
  <path d="M856 754.6C856.8 755.6 856.8 757.4 856 758.4" stroke-width="0.8"/><path d="M857.8 753C859.4 755 859.4 758 857.8 760" stroke-width="0.8" opacity=".8"/><path d="M859.6 751.6C862 754.4 862 758.6 859.6 761.4" stroke-width="0.8" opacity=".5"/>
</g>
<path d="M815.6 759.6H822.8C825.6 759.6 825.8 755.9 823.2 755.5C823 752.6 819.4 751.7 817.8 754C816 753.6 814.8 755 815.2 756.4C812.6 756.6 812.8 759.6 815.6 759.6Z" fill="#fff"/><path d="M816.4 758.4C815.6 756.4 817 755 818.6 755.6" stroke="#0f1216" stroke-width="0.7" fill="none"/>
<path d="M929.4 750.6H941.4V759.8H937L935.4 762.2L933.8 759.8H929.4Z" fill="#fff"/>
<path d="M931.4 753H939.4M931.4 755.2H939.4M931.4 757.4H937" stroke="#0f1216" stroke-width="0.7"/>
<path d="M956.3 746V768" stroke="#8a8d90" stroke-width="1"/>

</svg>
</div>
</body>
</html>
